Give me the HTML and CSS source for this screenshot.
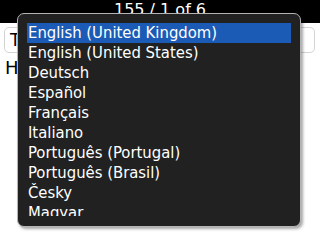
FILE: index.html
```html
<!DOCTYPE html>
<html>
<head>
<meta charset="utf-8">
<link rel="stylesheet" href="styles.css">
</head>
<body>
<div class="header">155 / 1 of 6</div>
<div class="form">
  <div class="field">To</div>
  <div class="label">Hello</div>
</div>
<div class="popup">
  <ul class="list">
    <li class="sel">English (United Kingdom)</li>
    <li>English (United States)</li>
    <li>Deutsch</li>
    <li>Español</li>
    <li>Français</li>
    <li>Italiano</li>
    <li>Português (Portugal)</li>
    <li>Português (Brasil)</li>
    <li>Česky</li>
    <li>Magyar</li>
  </ul>
</div>
</body>
</html>
```
FILE: styles.css
```css
html, body {
  margin: 0;
  padding: 0;
  width: 320px;
  height: 240px;
  overflow: hidden;
  background: #fff;
  font-family: "DejaVu Sans", sans-serif;
}
.header {
  height: 23px;
  background: #000;
  color: #fff;
  font-size: 16px;
  line-height: 20px;
  text-align: center;
}
.form {
  padding: 4px 5px 0 4px;
  display: flex;
  flex-direction: column;
  gap: 4px;
}
.field {
  height: 24px;
  border: 1px solid #d4d4d4;
  border-radius: 5px;
  padding-left: 5px;
  font-size: 17px;
  line-height: 24px;
  color: #000;
}
.label {
  padding-left: 1px;
  font-size: 18px;
  line-height: 22px;
  color: #000;
}
.popup {
  position: absolute;
  left: 17px;
  top: 13px;
  width: 264px;
  height: 198px;
  padding: 9px 9px 5px 9px;
  background: #212121;
  border: 1px solid #b4b4b4;
  border-radius: 7px;
  box-shadow: 2px 2px 3px rgba(0,0,0,0.35);
}
.list {
  list-style: none;
  margin: 0;
  padding: 0;
  height: 193px;
  overflow: hidden;
}
.list li {
  height: 20px;
  line-height: 20px;
  font-family: "DejaVu Sans Condensed", "DejaVu Sans", sans-serif;
  font-size: 16.5px;
  color: #fff;
  padding-left: 1px;
  white-space: nowrap;
}
.list li.sel {
  background: #1c5bb5;
}
```
